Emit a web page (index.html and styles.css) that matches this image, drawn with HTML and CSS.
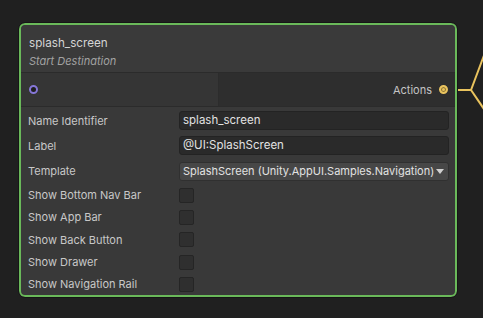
FILE: index.html
```html
<!DOCTYPE html>
<html lang="en">
  <head>
    <meta charset="UTF-8" />
    <title>splash_screen node</title>
    <link rel="stylesheet" href="styles.css">
  </head>
  <body>
    <div class="canvas">
      <!-- edge leaving the Actions port -->
      <svg class="edges" width="483" height="318" viewBox="0 0 483 318">
        <line x1="448" y1="90" x2="458" y2="90" stroke="#6b5d3a" stroke-width="1.5" />
        <path d="M458 90 L471 90 L486 50" fill="none" stroke="#e9c35e" stroke-width="2" />
        <path d="M471 90 L486 112" fill="none" stroke="#e9c35e" stroke-width="2" />
      </svg>

      <div class="node">
        <header class="node-header">
          <div class="node-title">splash_screen</div>
          <div class="node-subtitle">Start Destination</div>
        </header>

        <div class="ports">
          <div class="port-in">
            <span class="dot dot-in"></span>
          </div>
          <div class="port-out">
            <span class="port-label">Actions</span>
            <span class="dot dot-out"></span>
          </div>
        </div>

        <div class="props">
          <div class="row">
            <span class="prop-label">Name Identifier</span>
            <div class="field">splash_screen</div>
          </div>
          <div class="row">
            <span class="prop-label">Label</span>
            <div class="field">@UI:SplashScreen</div>
          </div>
          <div class="row row-select">
            <span class="prop-label">Template</span>
            <div class="dropdown">
              <span>SplashScreen (Unity.AppUI.Samples.Navigation)</span>
              <span class="caret"></span>
            </div>
          </div>
          <div class="row row-check">
            <span class="prop-label">Show Bottom Nav Bar</span>
            <span class="checkbox"></span>
          </div>
          <div class="row row-check">
            <span class="prop-label">Show App Bar</span>
            <span class="checkbox"></span>
          </div>
          <div class="row row-check">
            <span class="prop-label">Show Back Button</span>
            <span class="checkbox"></span>
          </div>
          <div class="row row-check">
            <span class="prop-label">Show Drawer</span>
            <span class="checkbox"></span>
          </div>
          <div class="row row-check">
            <span class="prop-label">Show Navigation Rail</span>
            <span class="checkbox"></span>
          </div>
        </div>
      </div>
    </div>
  </body>
</html>
```

FILE: styles.css
```css
/* Graph canvas */
body {
  margin: 0;
  background-color: #202020;
  font-family: Inter, "Noto Sans", sans-serif;
  font-size: 11px;
  color: #c8c8c8;
}

.canvas {
  position: relative;
  width: 483px;
  height: 318px;
  overflow: hidden;
  padding-top: 22px;
  box-sizing: border-box;
}

.edges {
  position: absolute;
  left: 0;
  top: 0;
}

/* Node */
.node {
  position: relative;
  margin-left: 18px;
  width: 440px;
  border: 1px solid #161616;
  border-radius: 7px;
  box-shadow: inset 0 0 0 2px #6ab95a;
  background-color: #393939;
  padding: 2px;
  box-sizing: border-box;
  overflow: hidden;
}

.node-header {
  background-color: #3a3a3a;
  padding: 11px 8px 0 8px;
  height: 48px;
  box-sizing: border-box;
  border-bottom: 1px solid #2b2b2b;
  border-radius: 5px 5px 0 0;
}

.node-title {
  color: #d4d4d4;
  font-size: 11.7px;
  line-height: 14px;
}

.node-subtitle {
  color: #a2a2a2;
  font-style: italic;
  font-size: 11px;
  line-height: 14px;
  margin-top: 4px;
}

/* Ports */
.ports {
  display: flex;
  height: 33px;
  border-bottom: 1px solid #2b2b2b;
}

.port-in {
  width: 198px;
  box-sizing: border-box;
  background-color: #353535;
  display: flex;
  align-items: center;
  padding-left: 8px;
  border-right: 1px solid #2c2c2c;
}

.port-out {
  flex: 1;
  background-color: #2e2e2e;
  display: flex;
  align-items: center;
  justify-content: flex-end;
  gap: 7px;
  padding-right: 7px;
}

.port-label {
  color: #c4c4c4;
}

.dot {
  width: 5px;
  height: 5px;
  border-radius: 50%;
  display: inline-block;
}

.dot-in {
  background-color: #1e1e1e;
  border: 2px solid #8576d6;
}

.dot-out {
  background-color: #e9c35e;
  border: 2px solid #e9c35e;
  box-shadow: inset 0 0 0 1px #8a7234;
}

/* Properties */
.props {
  padding: 1px 6px 0 7px;
}

.row {
  display: flex;
  align-items: center;
  height: 25px;
}

.row-select {
  height: 26px;
}

.row-check {
  height: 22.3px;
}

.prop-label {
  width: 151px;
  flex-shrink: 0;
  color: #c8c8c8;
  white-space: nowrap;
}

.field {
  flex: 1;
  height: 17px;
  line-height: 17px;
  background-color: #2a2a2a;
  border: 1px solid #232323;
  border-radius: 3px;
  padding-left: 3px;
  color: #e2e2e2;
  font-size: 11.5px;
}

.dropdown {
  flex: 1;
  height: 17px;
  line-height: 17px;
  background-color: #474747;
  border: 1px solid #303030;
  border-radius: 3px;
  padding: 0 4px 0 3px;
  color: #e2e2e2;
  font-size: 11px;
  white-space: nowrap;
  display: flex;
  justify-content: space-between;
  align-items: center;
}

.caret {
  width: 0;
  height: 0;
  border-left: 4px solid transparent;
  border-right: 4px solid transparent;
  border-top: 5px solid #d0d0d0;
}

.checkbox {
  width: 13px;
  height: 13px;
  background-color: #2f2f2f;
  border: 1px solid #252525;
  border-radius: 2px;
}
```
